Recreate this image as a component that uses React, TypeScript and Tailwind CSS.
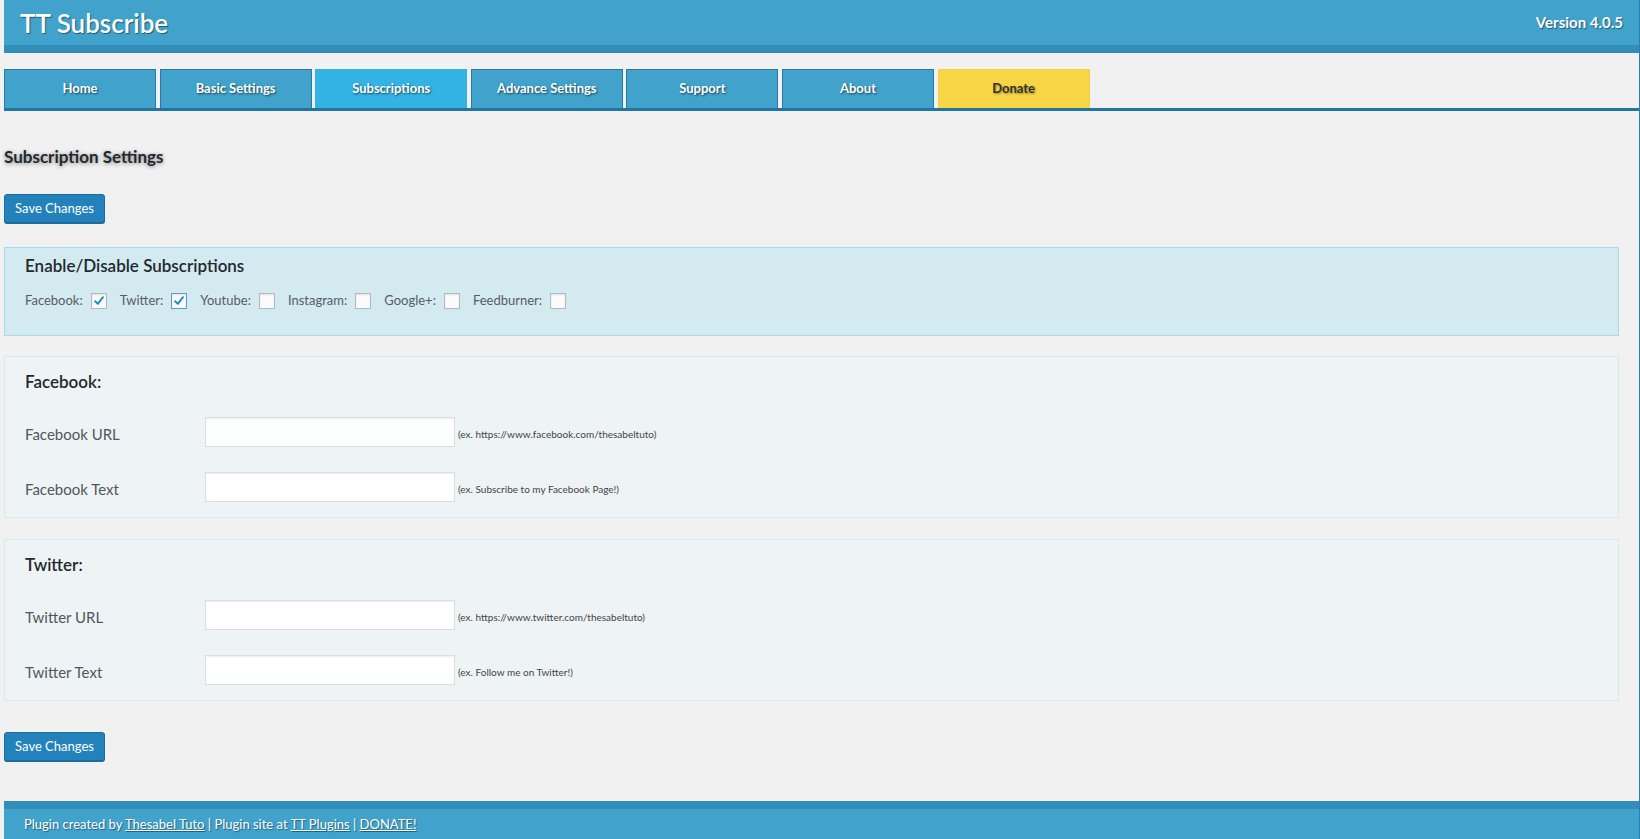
import { useState } from "react";

const tabs = [
  "Home",
  "Basic Settings",
  "Subscriptions",
  "Advance Settings",
  "Support",
  "About",
  "Donate",
];

const networks = [
  { name: "Facebook", checked: true },
  { name: "Twitter", checked: true, focused: true },
  { name: "Youtube", checked: false },
  { name: "Instagram", checked: false },
  { name: "Google+", checked: false },
  { name: "Feedburner", checked: false },
];

function Checkbox({ checked, focused }: { checked: boolean; focused?: boolean }) {
  return (
    <span
      className={
        "inline-flex w-4 h-4 items-center justify-center bg-[#fbfbfb] border shadow-[inset_0_1px_2px_rgba(0,0,0,0.1)] " +
        (focused
          ? "border-[#5b9dd9] shadow-[0_0_2px_rgba(30,140,190,0.8)]"
          : "border-[#b4b9be]")
      }
    >
      {checked && (
        <svg width="14" height="14" viewBox="0 0 16 16">
          <path
            d="M3.5 8.2 L6.6 11.2 L12.6 3.6"
            fill="none"
            stroke="#1e8cbe"
            strokeWidth="2.2"
            strokeLinecap="round"
            strokeLinejoin="round"
          />
        </svg>
      )}
    </span>
  );
}

function SaveButton() {
  return (
    <button className="h-[29px] w-[101px] rounded-[3px] bg-[#2382bb] border border-[#1b6b9b] text-white text-[13px] shadow-[0_1px_0_#1b6b9b]">
      Save Changes
    </button>
  );
}

function FieldRow({ label, hint }: { label: string; hint: string }) {
  const [value, setValue] = useState("");
  return (
    <div className="flex items-center">
      <label className="w-[180px] text-[15px] text-[#50575e] pt-1">{label}</label>
      <input
        value={value}
        onChange={(e) => setValue(e.target.value)}
        className="w-[250px] h-[30px] bg-white border border-[#dddddd] shadow-[inset_0_1px_2px_rgba(0,0,0,0.07)] outline-none px-2 text-[13px]"
      />
      <span className="ml-[3px] pt-1 text-[10px] text-[#444]">{hint}</span>
    </div>
  );
}

function NetworkPanel({
  title,
  rows,
}: {
  title: string;
  rows: { label: string; hint: string }[];
}) {
  return (
    <div className="bg-[#eef3f6] border border-[#d6e9f0] px-5 pt-[14px] pb-[15px]">
      <h3 className="text-[17px] leading-[22px] font-semibold text-[#23282d]">{title}</h3>
      <div className="flex flex-col gap-[25px] mt-[24px]">
        {rows.map((r) => (
          <FieldRow key={r.label} label={r.label} hint={r.hint} />
        ))}
      </div>
    </div>
  );
}

export default function App() {
  return (
    <div
      className="min-h-[839px] bg-[#f1f1f1] pl-1 text-[#23282d]"
      style={{ fontFamily: "Lato, 'Open Sans', sans-serif" }}
    >
      <div className="min-h-[839px] flex flex-col border-r border-[#2b7fb3]">
        <div className="h-[53px] bg-[#41a2cb] border-b-8 border-[#338dba] flex items-center justify-between pl-4 pr-4">
          <h1 className="text-[26px] font-semibold text-white [text-shadow:1px_1px_1px_rgba(0,0,0,0.45)] leading-none">
            TT Subscribe
          </h1>
          <span className="text-[15px] font-bold text-white [text-shadow:1px_1px_1px_rgba(0,0,0,0.45)]">
            Version 4.0.5
          </span>
        </div>

        <div className="mt-4 flex gap-[3.6px] border-b-[3px] border-[#2175a3]">
          {tabs.map((t) => {
            const active = t === "Subscriptions";
            const donate = t === "Donate";
            return (
              <div
                key={t}
                className={
                  "w-[152px] h-[39px] flex items-center justify-center text-[13px] font-bold border border-b-0 " +
                  (donate
                    ? "bg-[#f7d544] border-[#f0d04c] text-[#333] [text-shadow:1px_1px_2px_rgba(0,0,0,0.35)]"
                    : active
                      ? "bg-[#33b3e3] border-[#33b3e3] text-white [text-shadow:1px_1px_2px_rgba(0,0,0,0.6)]"
                      : "bg-[#41a2cb] border-[#2b78a7] text-white [text-shadow:1px_1px_2px_rgba(0,0,0,0.6)]")
                }
              >
                {t}
              </div>
            );
          })}
        </div>

        <div className="pr-5">
          <h2 className="mt-[34px] text-[17px] leading-[24px] font-bold text-[#23282d] [text-shadow:0_1px_4px_rgba(0,0,0,0.45)]">
            Subscription Settings
          </h2>

          <div className="mt-[25px]">
            <SaveButton />
          </div>

          <div className="mt-[24px] bg-[#d4eaf1] border border-[#a9dbef] px-5 pt-[7px] pb-[24px]">
            <h3 className="text-[17px] leading-[22px] font-semibold text-[#23282d]">
              Enable/Disable Subscriptions
            </h3>
            <div className="mt-[14px] flex items-center h-5">
              {networks.map((n) => (
                <div key={n.name} className="flex items-center mr-[13px]">
                  <span className="text-[13px] text-[#555d66] mr-2">{n.name}:</span>
                  <Checkbox checked={n.checked} focused={n.focused} />
                </div>
              ))}
            </div>
          </div>

          <div className="mt-5">
            <NetworkPanel
              title="Facebook:"
              rows={[
                { label: "Facebook URL", hint: "(ex. https://www.facebook.com/thesabeltuto)" },
                { label: "Facebook Text", hint: "(ex. Subscribe to my Facebook Page!)" },
              ]}
            />
          </div>

          <div className="mt-[21px]">
            <NetworkPanel
              title="Twitter:"
              rows={[
                { label: "Twitter URL", hint: "(ex. https://www.twitter.com/thesabeltuto)" },
                { label: "Twitter Text", hint: "(ex. Follow me on Twitter!)" },
              ]}
            />
          </div>

          <div className="mt-[31px]">
            <SaveButton />
          </div>
        </div>

        <div className="flex-1" />

        <div className="mt-8 h-[38px] bg-[#41a2cb] border-t-8 border-[#338dba] pl-5 pt-[6px] text-[13px] text-white [text-shadow:1px_1px_1px_rgba(0,0,0,0.4)]">
          Plugin created by <a className="underline">Thesabel Tuto</a> | Plugin site at{" "}
          <a className="underline">TT Plugins</a> | <a className="underline">DONATE!</a>
        </div>
      </div>
    </div>
  );
}
